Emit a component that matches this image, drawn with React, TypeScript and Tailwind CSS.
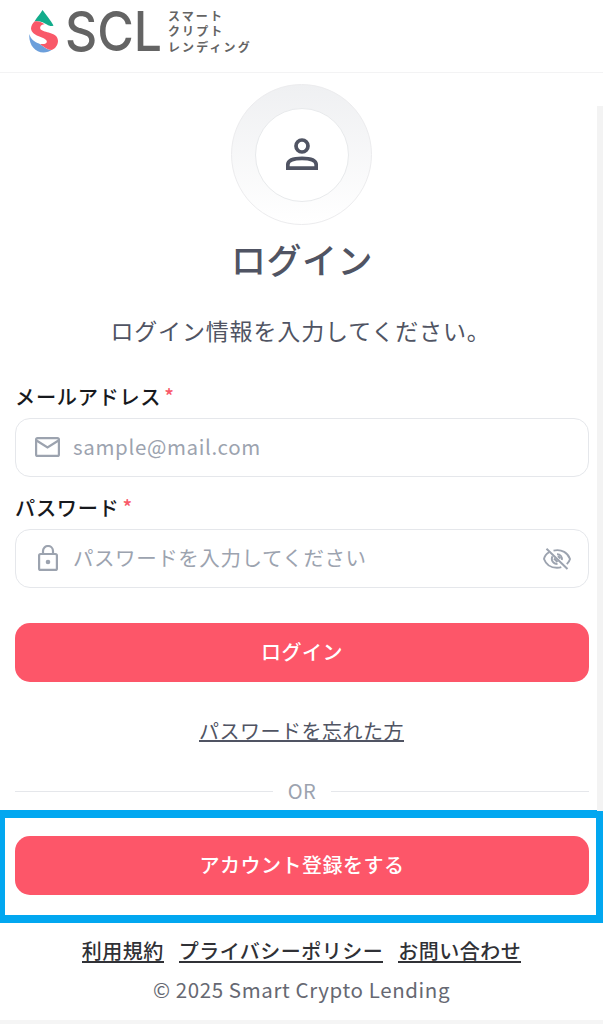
import type { ReactNode } from 'react';

function DropMark() {
  return (
    <svg viewBox="0 0 29 43" className="h-[43px] w-[29px]" aria-hidden="true">
      <path d="M13.5 0C10 5.500 7.500 8 5.500 11.500C10 10.300 15 12.500 18 14.500C20 16 22.500 16.500 24.500 15.500C22 10.500 17 5 13.500 0Z" fill="#12ac8b" />
      <path d="M0.300 24C-0.500 35 6 42.500 14.500 42.500C18 42.500 20.500 41.500 22.500 40C17 39.500 14 36 10 33.500C6 32.500 1.500 29 0.300 24Z" fill="#6c9fdb" />
      <path d="M5.500 11.500C9 10.800 12.500 12 15.500 14.200C11 14.500 10 18.500 12.500 20C17 23 29 22.500 29 31C28.800 35.500 26 39 22.500 40C17.500 39.500 14.500 36.500 11 34C15 34.500 19 33.500 17.500 30.500C15 26.500 3 26.500 2 18.500C2 16 3.500 13.500 5.500 11.500Z" fill="#f95969" />
    </svg>
  );
}

function PersonIcon() {
  return (
    <svg viewBox="0 0 32 32" className="-mt-0.5 h-8 w-8" fill="none" stroke="#505463" strokeWidth="3.700" aria-hidden="true">
      <circle cx="16" cy="8" r="6" />
      <path d="M1.800 30.200V26.800C1.800 22.200 8.500 20.300 16 20.300S30.200 22.200 30.200 26.800V30.200Z" />
    </svg>
  );
}

function MailIcon() {
  return (
    <svg viewBox="0 0 25 20" className="-mt-0.5 h-5 w-[25px]" fill="none" stroke="#9ca3af" strokeWidth="2.200" aria-hidden="true">
      <rect x="1.100" y="1.100" width="22.800" height="17.800" rx="1.500" />
      <path d="M1.500 3.500L12.500 10.500L23.500 3.500" />
    </svg>
  );
}

function LockIcon() {
  return (
    <svg viewBox="0 0 20 26" className="-mt-0.5 h-[26px] w-5" fill="none" stroke="#9ca3af" strokeWidth="2.200" aria-hidden="true">
      <rect x="1.100" y="9" width="17.800" height="15.900" rx="1.500" />
      <path d="M5 9V6a5 5 0 0 1 10 0v3" />
      <circle cx="10" cy="17" r="2.300" fill="#9ca3af" stroke="none" />
    </svg>
  );
}

function EyeOffIcon() {
  return (
    <svg viewBox="0 0 28 22" className="h-[22px] w-7" fill="none" stroke="#9ca3af" strokeWidth="1.900" aria-hidden="true">
      <path d="M6 4.200C3.500 5.800 1.500 8.200 1 11C3 16.500 8 19.800 14 19.800C15.500 19.800 17 19.600 18.300 19.100" />
      <path d="M10.500 2.600C19 .8 25 5 27 11C26.500 13 25.300 14.700 23.800 16.100" />
      <path d="M9.500 8.200C7.500 12 10 16 14.500 16M14 6.200C17.500 6.200 19.500 9 18.800 12" />
      <path d="M11 10.500L14.500 14M15 8L17.500 10.500" strokeWidth="2" />
      <path d="M3.500 .8L24.500 21" strokeWidth="2" />
    </svg>
  );
}

function Field({ label, icon, placeholder, tracking = '', action }: {
  label: string;
  icon: ReactNode;
  placeholder: string;
  tracking?: string;
  action?: ReactNode;
}) {
  return (
    <div>
      <div className="flex h-8 items-center text-[20.200px] font-medium leading-8 tracking-[0.700px] text-[#17191d]">
        {label}
        <span className="ml-[3px] -mt-[3px] text-xl leading-8 text-[#f95969]">*</span>
      </div>
      <div className="mt-[5px] flex h-[59px] items-center rounded-[15px] border border-[#e5e7eb] pl-[18px] pr-[17px]">
        <span className="flex w-[27px] justify-center">{icon}</span>
        <span className={`ml-3 -mt-0.5 flex-1 text-[20.500px] text-[#9ca3af] ${tracking}`}>{placeholder}</span>
        {action}
      </div>
    </div>
  );
}

function PrimaryButton({ children }: { children: ReactNode }) {
  return (
    <button
      type="button"
      className="flex h-[59px] w-full items-center justify-center rounded-[15px] bg-[#fd5669] pb-0.5 text-[20px] font-medium tracking-[0.500px] text-white"
    >
      {children}
    </button>
  );
}

const FOOTER_LINKS = ['利用規約', 'プライバシーポリシー', 'お問い合わせ'];

export default function App() {
  return (
    <div className="relative flex h-[1024px] w-full flex-col overflow-hidden bg-white font-['Noto_Sans_CJK_JP',sans-serif] text-[#505463]">
      <header className="flex h-[73px] shrink-0 items-start border-b border-[#f3f3f4] pl-[29px] pt-2.5">
        <DropMark />
        <svg viewBox="0 0 96 43" className="ml-2 h-[43px] w-24 overflow-visible">
          <text x="-1" y="41" textLength="97" lengthAdjust="spacingAndGlyphs" className="fill-[#646464] font-['Inter',sans-serif] text-[55px] font-medium">
            SCL
          </text>
        </svg>
        <div className="ml-1.5 -mt-0.5 text-[12px] font-bold leading-[15.300px] tracking-[2.100px] text-[#646464]">
          <p>スマート</p>
          <p>クリプト</p>
          <p>レンディング</p>
        </div>
      </header>

      <div className="absolute right-0 top-[106px] h-[705px] w-1.5 bg-[#f3f3f3]" />

      <main className="pl-[15px] pr-3.5 pt-[11px]">
        <div className="ml-[216px] flex size-[141px] items-center justify-center rounded-full border border-[#ececee] bg-linear-to-b from-[#eff0f2] to-white">
          <div className="flex size-[94px] items-center justify-center rounded-full border border-[#e8eaec] bg-white">
            <PersonIcon />
          </div>
        </div>
        <h1 className="mt-2.5 text-center text-[35px] font-medium leading-[48px] tracking-[0.500px]">ログイン</h1>
        <p className="mt-[31px] pr-[3px] text-center text-[23px] leading-8 tracking-[0.850px]">ログイン情報を入力してください。</p>

        <div className="mt-[35px] space-y-[15px]">
          <Field
            label="メールアドレス"
            icon={<MailIcon />}
            placeholder="sample@mail.com"
            tracking="tracking-[0.650px]"
          />
          <Field
            label="パスワード"
            icon={<LockIcon />}
            placeholder="パスワードを入力してください"
            tracking="tracking-[0.560px]"
            action={<EyeOffIcon />}
          />
        </div>

        <div className="mt-[35px]">
          <PrimaryButton>ログイン</PrimaryButton>
        </div>
        <div className="mt-[33px] flex justify-center pr-px">
          <a className="h-[27px] border-b-2 border-[#505463] text-[20px] leading-[32px] tracking-[0.500px]">パスワードを忘れた方</a>
        </div>
        <div className="mt-[33px] flex h-8 items-center gap-[15px] text-[20px] text-[#9ca3af]">
          <span className="h-px flex-1 bg-[#e5e7eb]" />
          <span className="tracking-[0.500px]">OR</span>
          <span className="h-px flex-1 bg-[#e5e7eb]" />
        </div>
      </main>

      <section className="mt-[3px] h-[113px] shrink-0 border-y-8 border-l-5 border-r-[7px] border-[#02a7f0] bg-white pl-2.5 pr-[7px] pt-[18px]">
        <PrimaryButton>アカウント登録をする</PrimaryButton>
      </section>

      <footer className="flex flex-col items-center pt-3.5">
        <nav className="flex gap-[15px] text-[20px] font-medium leading-8 tracking-[0.500px] text-[#303136]">
          {FOOTER_LINKS.map((link) => (
            <a key={link} className="h-[26px] border-b-2 border-[#303136] leading-[28px]">{link}</a>
          ))}
        </nav>
        <p className="mt-2.5 text-[20.500px] leading-8 tracking-[0.600px] text-[#666872]">© 2025 Smart Crypto Lending</p>
      </footer>
      <div className="mt-auto h-1 bg-[#f5f5f5]" />
    </div>
  );
}
